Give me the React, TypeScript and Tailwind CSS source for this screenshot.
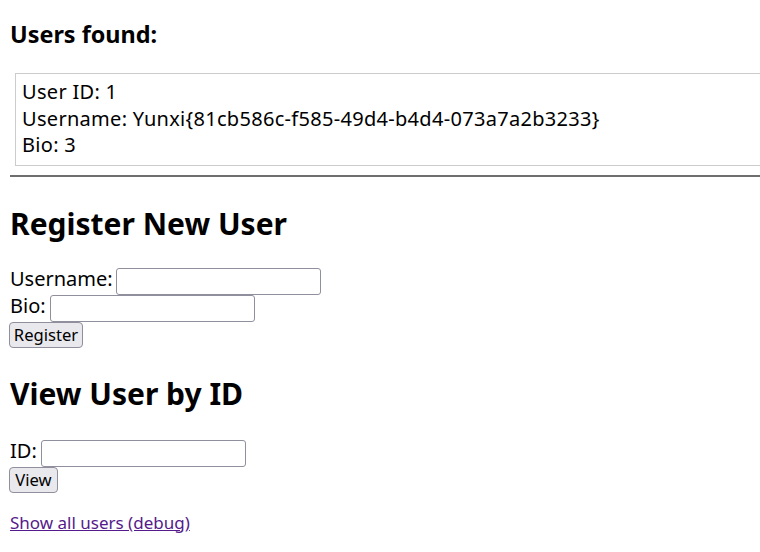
import React from "react";

export default function App() {
  return (
    <div
      className="w-[760px] h-[552px] overflow-hidden bg-white text-black px-[10px] text-[20px] leading-[26.6px] tracking-[0.3px]"
      style={{ fontFamily: '"Noto Sans", sans-serif' }}
    >
      <h3 className="mt-[19px] text-[23.4px] leading-[31px] font-bold tracking-normal">Users found:</h3>
      <div className="mt-[23px] ml-[5px] w-[800px] border border-[#cccccc] pt-[5px] pb-[6px] px-[6px]">
        <div>User ID: 1</div>
        <div>Username: Yunxi{"{"}81cb586c-f585-49d4-b4d4-073a7a2b3233{"}"}</div>
        <div>Bio: 3</div>
      </div>
      <div className="mt-[9px] w-[800px] h-[2px] bg-[#6e6e6e]" />
      <h2 className="mt-[27px] text-[30px] leading-[40px] font-bold tracking-normal">Register New User</h2>
      <form className="mt-[22px]" onSubmit={(e) => e.preventDefault()}>
        <div className="flex items-start h-[27px] gap-[5px]">
          <span className="w-[101px] whitespace-nowrap tracking-normal">Username:</span>
          <input type="text" className="mt-[2px] w-[205px] h-[27px] border border-[#8f8f9d] rounded-[3px] bg-white" />
        </div>
        <div className="flex items-start h-[27px] gap-[5px]">
          <span className="w-[35px] whitespace-nowrap tracking-normal">Bio:</span>
          <input type="text" className="mt-[2px] w-[205px] h-[27px] border border-[#8f8f9d] rounded-[3px] bg-white" />
        </div>
        <div className="flex items-start h-[28px]">
          <button
            type="submit"
            className="mt-[2px] w-[74px] h-[26px] -ml-[1px] border border-[#8f8f9d] rounded-[4px] bg-[#e9e9ed] text-[16.6px] leading-[24px] tracking-normal text-black flex items-center justify-center"
          >
            Register
          </button>
        </div>
      </form>
      <h2 className="mt-[26px] text-[30px] leading-[40px] font-bold tracking-normal">View User by ID</h2>
      <form className="mt-[24px]" onSubmit={(e) => e.preventDefault()}>
        <div className="flex items-start h-[27px] gap-[5px]">
          <span className="w-[26px] whitespace-nowrap tracking-normal">ID:</span>
          <input type="text" className="mt-[2px] w-[205px] h-[27px] border border-[#8f8f9d] rounded-[3px] bg-white" />
        </div>
        <div className="flex items-start h-[28px]">
          <button
            type="submit"
            className="mt-[2px] w-[49px] h-[26px] -ml-[1px] border border-[#8f8f9d] rounded-[4px] bg-[#e9e9ed] text-[16.6px] leading-[24px] tracking-normal text-black flex items-center justify-center"
          >
            View
          </button>
        </div>
      </form>
      <p className="mt-[17px] text-[17px] tracking-normal">
        <a href="#" className="text-[#551a8b] underline">Show all users (debug)</a>
      </p>
    </div>
  );
}
